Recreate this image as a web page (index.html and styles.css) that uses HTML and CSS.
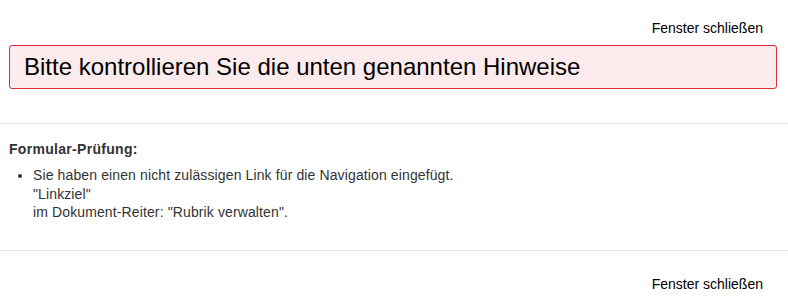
FILE: index.html
```html
<!DOCTYPE html>
<html lang="de">
<head>
<meta charset="utf-8">
<link rel="stylesheet" href="styles.css">
</head>
<body>
<div class="actions actions-top"><a class="close-link">Fenster schließen</a></div>
<div class="alert">Bitte kontrollieren Sie die unten genannten Hinweise</div>
<hr class="sep">
<div class="section">
  <div class="section-title">Formular-Prüfung:</div>
  <ul class="issues">
    <li>Sie haben einen nicht zulässigen Link für die Navigation eingefügt.<br>"Linkziel"<br>im Dokument-Reiter: "Rubrik verwalten".</li>
  </ul>
</div>
<hr class="sep">
<div class="actions actions-bottom"><a class="close-link">Fenster schließen</a></div>
</body>
</html>
```
FILE: styles.css
```css
html, body {
  margin: 0;
  padding: 0;
  background: #fff;
}
body {
  font-family: "Liberation Sans", Arial, sans-serif;
  font-size: 14px;
  color: #333;
}
.actions {
  display: flex;
  justify-content: flex-end;
  padding-right: 25px;
  line-height: 18px;
}
.actions-top {
  padding-top: 19px;
  height: 26px;
  box-sizing: content-box;
}
.actions-bottom {
  padding-top: 24px;
}
.close-link {
  font-size: 14px;
  color: #000;
  text-decoration: none;
  cursor: pointer;
}
.alert {
  margin: 0 11px 0 9px;
  border: 1px solid #d9303a;
  border-radius: 3px;
  background: #fcebec;
  color: #000;
  font-size: 24px;
  line-height: 28px;
  padding: 7px 14px 7px 14px;
}
.sep {
  border: 0;
  border-top: 1px solid #e5e5e5;
  margin: 0;
}
.alert + .sep {
  margin-top: 34px;
}
.section {
  padding: 16px 9px 28px 9px;
  letter-spacing: 0.12px;
}
.section-title {
  font-weight: bold;
  line-height: 18px;
  letter-spacing: 0.3px;
}
.issues {
  margin: 8px 0 0 0;
  padding-left: 24px;
  line-height: 18.5px;
}
```
